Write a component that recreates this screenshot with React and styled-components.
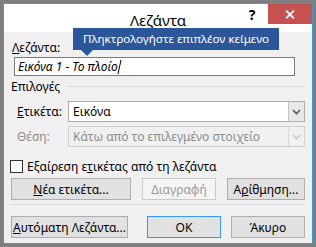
import React from "react";
import styled, { createGlobalStyle } from "styled-components";

const GlobalStyle = createGlobalStyle`
  html, body {
    margin: 0;
    padding: 0;
    background: #7f7f7f;
  }
  body {
    font-family: "Noto Sans", "Open Sans", sans-serif;
    font-size: 12px;
    color: #000;
  }
`;

const Frame = styled.div`
  width: 316px;
  height: 247px;
  box-sizing: border-box;
  padding: 3px;
`;

const Window = styled.div`
  position: relative;
  height: 100%;
  box-sizing: border-box;
  border: 1px solid #3a9bd0;
  background: #f0f0f0;
  display: flex;
  flex-direction: column;
`;

const TitleBar = styled.div`
  height: 28px;
  background: #fff;
  display: grid;
  grid-template-columns: 1fr auto 1fr;
`;

const Title = styled.div`
  grid-column: 2;
  font-size: 15px;
  padding-top: 6px;
  line-height: 20px;
`;

const Controls = styled.div`
  grid-column: 3;
  justify-self: end;
  align-self: start;
  display: flex;
  align-items: flex-start;
`;

const HelpButton = styled.div`
  width: 20px;
  margin-right: 6px;
  padding-top: 3px;
  font-size: 14px;
  font-weight: 700;
  text-align: center;
  line-height: 16px;
`;

const CloseButton = styled.div`
  width: 44px;
  height: 20px;
  background: #c75050;
  display: flex;
  align-items: center;
  justify-content: center;
`;

const Tooltip = styled.div`
  position: absolute;
  left: 69px;
  top: 24px;
  height: 22px;
  box-sizing: border-box;
  background: #2b579a;
  color: #fff;
  font-size: 11.6px;
  line-height: 22px;
  padding: 0 10px;
  white-space: nowrap;
  z-index: 2;
  &::after {
    content: "";
    position: absolute;
    left: 8px;
    top: 22px;
    border-left: 6px solid transparent;
    border-right: 6px solid transparent;
    border-top: 6px solid #2b579a;
  }
`;

const Body = styled.div`
  flex: 1;
  padding: 8px 7px 0 7px;
  display: flex;
  flex-direction: column;
`;

const FieldLabel = styled.div`
  line-height: 16px;
  padding-left: 1px;
  color: ${(p) => (p.$disabled ? "#8d8d8d" : "#000")};
`;

const TextInput = styled.div`
  margin: 1px 10px 0 3px;
  height: 19px;
  box-sizing: border-box;
  border: 1px solid #7a7a7a;
  background: #fff;
  font-style: italic;
  display: flex;
  align-items: center;
  padding-left: 3px;
`;

const Caret = styled.span`
  display: inline-block;
  width: 1px;
  height: 14px;
  background: #000;
  margin-left: 1px;
  transform: skewX(-12deg);
`;

const GroupHeader = styled.div`
  margin-top: 3px;
  display: flex;
  align-items: center;
  line-height: 16px;
  gap: 7px;
  &::after {
    content: "";
    flex: 1;
    height: 1px;
    background: #dcdcdc;
    margin-top: -2px;
  }
`;

const SelectRow = styled.div`
  display: flex;
  align-items: center;
  margin-top: ${(p) => p.$top}px;
  padding-left: 6px;
`;

const SelectLabel = styled.div`
  width: 51px;
  color: ${(p) => (p.$disabled ? "#8d8d8d" : "#000")};
`;

const Select = styled.div`
  flex: 1;
  height: 21px;
  box-sizing: border-box;
  border: 1px solid ${(p) => (p.$disabled ? "#cfcfcf" : "#acacac")};
  background: ${(p) => (p.$disabled ? "#f0f0f0" : "#fff")};
  color: ${(p) => (p.$disabled ? "#8d8d8d" : "#000")};
  display: flex;
  align-items: center;
`;

const SelectValue = styled.div`
  flex: 1;
  padding-left: 4px;
`;

const SelectArrow = styled.div`
  width: 15px;
  height: 100%;
  border-left: 1px solid ${(p) => (p.$disabled ? "#dadada" : "#c4c4c4")};
  background: ${(p) => (p.$disabled ? "#f0f0f0" : "#e8e8e8")};
  display: flex;
  align-items: center;
  justify-content: center;
`;

const CheckRow = styled.label`
  margin-top: 11px;
  margin-left: -1px;
  display: flex;
  align-items: center;
  gap: 4px;
`;

const CheckBox = styled.span`
  width: 13px;
  height: 13px;
  box-sizing: border-box;
  border: 1px solid #333;
  background: #fff;
`;

const ButtonRow = styled.div`
  display: flex;
  gap: 10px;
  margin-top: ${(p) => p.$top}px;
  justify-content: ${(p) => p.$justify || "flex-start"};
`;

const Button = styled.div`
  width: ${(p) => p.$w}px;
  height: 22px;
  box-sizing: border-box;
  border: 1px solid ${(p) => (p.$default ? "#3399ff" : p.$disabled ? "#cacaca" : "#adadad")};
  background: ${(p) => (p.$disabled ? "#f4f4f4" : "#e1e1e1")};
  color: ${(p) => (p.$disabled ? "#9a9a9a" : "#000")};
  display: flex;
  align-items: center;
  justify-content: center;
  margin-right: ${(p) => (p.$push ? "auto" : "0")};
`;

const Separator = styled.div`
  height: 1px;
  background: #dadada;
  margin-top: 4px;
`;

const Chevron = ({ color }) => (
  <svg width="9" height="6" viewBox="0 0 9 6">
    <polyline points="1,1 4.5,4.5 8,1" fill="none" stroke={color} strokeWidth="1.6" />
  </svg>
);

export default function App() {
  return (
    <Frame>
      <GlobalStyle />
      <Window>
        <TitleBar>
          <Title>Λεζάντα</Title>
          <Controls>
            <HelpButton>?</HelpButton>
            <CloseButton>
              <svg width="10" height="9" viewBox="0 0 10 9">
                <path d="M1 0.5 L9 8.5 M9 0.5 L1 8.5" stroke="#fff" strokeWidth="1.8" />
              </svg>
            </CloseButton>
          </Controls>
        </TitleBar>
        <Tooltip>Πληκτρολογήστε επιπλέον κείμενο</Tooltip>
        <Body>
          <FieldLabel>
            <u>Λ</u>εζάντα:
          </FieldLabel>
          <TextInput>
            Εικόνα 1 - Το πλοίο<Caret />
          </TextInput>
          <GroupHeader>Επιλογές</GroupHeader>
          <SelectRow $top={6}>
            <SelectLabel>
              <u>Ε</u>τικέτα:
            </SelectLabel>
            <Select>
              <SelectValue>Εικόνα</SelectValue>
              <SelectArrow>
                <Chevron color="#555" />
              </SelectArrow>
            </Select>
          </SelectRow>
          <SelectRow $top={4}>
            <SelectLabel $disabled>Θέση:</SelectLabel>
            <Select $disabled>
              <SelectValue>Κάτω από το επιλεγμένο στοιχείο</SelectValue>
              <SelectArrow $disabled>
                <Chevron color="#c8c8c8" />
              </SelectArrow>
            </Select>
          </SelectRow>
          <CheckRow>
            <CheckBox />
            <span>
              Εξαίρεση ε<u>τ</u>ικέτας από τη λεζάντα
            </span>
          </CheckRow>
          <ButtonRow $top={3} $justify="space-between">
            <Button $w={120}>
              <span>
                <u>Ν</u>έα ετικέτα...
              </span>
            </Button>
            <Button $w={74} $disabled>
              Διαγραφή
            </Button>
            <Button $w={78}>
              <span>
                Α<u>ρ</u>ίθμηση...
              </span>
            </Button>
          </ButtonRow>
          <Separator />
          <ButtonRow $top={11}>
            <Button $w={117} $push>
              <span>
                <u>Α</u>υτόματη Λεζάντα...
              </span>
            </Button>
            <Button $w={74} $default>
              OK
            </Button>
            <Button $w={74}>Άκυρο</Button>
          </ButtonRow>
        </Body>
      </Window>
    </Frame>
  );
}
